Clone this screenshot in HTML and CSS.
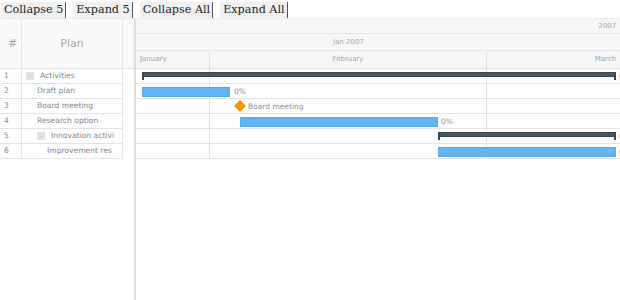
FILE: index.html
```html
<!DOCTYPE html>
<html lang="en">
<head>
  <meta charset="UTF-8">
  <title>Gantt</title>
  <link rel="stylesheet" href="styles.css">
</head>
<body>
  <div class="toolbar">
    <button>Collapse 5</button>
    <button>Expand 5</button>
    <button>Collapse All</button>
    <button>Expand All</button>
  </div>

  <div class="gantt">
    <!-- Data grid -->
    <div class="grid">
      <div class="grid-head">
        <div class="col-num">#</div>
        <div class="col-plan">Plan</div>
      </div>
      <div class="grid-row">
        <div class="col-num">1</div>
        <div class="col-plan lvl-0"><span class="toggle">-</span>Activities</div>
      </div>
      <div class="grid-row">
        <div class="col-num">2</div>
        <div class="col-plan lvl-1">Draft plan</div>
      </div>
      <div class="grid-row">
        <div class="col-num">3</div>
        <div class="col-plan lvl-1">Board meeting</div>
      </div>
      <div class="grid-row">
        <div class="col-num">4</div>
        <div class="col-plan lvl-1">Research option</div>
      </div>
      <div class="grid-row">
        <div class="col-num">5</div>
        <div class="col-plan lvl-1"><span class="toggle">-</span>Innovation activi</div>
      </div>
      <div class="grid-row">
        <div class="col-num">6</div>
        <div class="col-plan lvl-2">Improvement res</div>
      </div>
    </div>

    <!-- Timeline -->
    <div class="timeline">
      <div class="tl-head">
        <div class="tl-year">2007</div>
        <div class="tl-span">Jan 2007</div>
        <div class="tl-months">
          <div class="month m-left">January</div>
          <div class="month m-center">February</div>
          <div class="month m-right">March</div>
        </div>
      </div>
      <div class="tl-body">
        <div class="tl-cols">
          <div class="tl-col"></div>
          <div class="tl-col"></div>
          <div></div>
        </div>
        <div class="tl-row">
          <div class="summary" style="left: 6px; width: 474px;"></div>
          <span class="bar-label" style="left: 483px;">0%</span>
        </div>
        <div class="tl-row">
          <div class="task" style="left: 6px; width: 88px;"></div>
          <span class="bar-label" style="left: 98px;">0%</span>
        </div>
        <div class="tl-row">
          <div class="milestone" style="left: 100px;"></div>
          <span class="bar-label" style="left: 112px;">Board meeting</span>
        </div>
        <div class="tl-row">
          <div class="task" style="left: 104px; width: 198px;"></div>
          <span class="bar-label" style="left: 305px;">0%</span>
        </div>
        <div class="tl-row">
          <div class="summary" style="left: 302px; width: 178px;"></div>
          <span class="bar-label" style="left: 483px;">0%</span>
        </div>
        <div class="tl-row">
          <div class="task" style="left: 302px; width: 178px;"></div>
          <span class="bar-label" style="left: 483px;">0%</span>
        </div>
      </div>
    </div>
  </div>
</body>
</html>
```

FILE: styles.css
```css
/* Reset */
* {
  margin: 0;
  padding: 0;
  box-sizing: border-box;
}

body {
  font-family: 'DejaVu Sans', sans-serif;
  background-color: #fff;
  width: 620px;
  height: 300px;
  overflow: hidden;
}

/* Buttons on top */
.toolbar {
  display: flex;
  gap: 7px;
  height: 18px;
  padding: 2px 0 0 1px;
}

.toolbar button {
  font-family: 'DejaVu Serif', serif;
  font-size: 11.2px;
  line-height: 16px;
  height: 16px;
  padding: 0 2px 0 3px;
  color: #222;
  background-color: #f0f0f0;
  border: none;
  border-right: 1px solid #555;
}

/* Chart */
.gantt {
  display: flex;
  height: 282px;
  border-top: 1px solid #ececec;
}

/* Data grid */
.grid {
  flex: none;
  width: 136px;
  border-right: 2px solid #dcdcdc;
}

.grid-head {
  display: flex;
  height: 50px;
  background-color: #f9f9f9;
  border-bottom: 1px solid #e3e3e3;
  color: #a3a9ad;
  font-size: 11px;
}

.grid-head .col-num,
.grid-head .col-plan {
  display: flex;
  justify-content: center;
  align-items: center;
}

.grid-row {
  display: flex;
  width: 123px;
  height: 15px;
  border-bottom: 1px solid #e3e3e3;
  color: #7f878d;
  font-size: 7.6px;
  line-height: 14px;
}

.col-num {
  width: 22px;
  flex: none;
  padding-left: 4px;
  border-right: 1px solid #e3e3e3;
}

.col-plan {
  width: 101px;
  flex: none;
  border-right: 1px solid #e3e3e3;
  white-space: nowrap;
  overflow: hidden;
  display: flex;
  align-items: center;
}

.lvl-0 { padding-left: 4px; }
.lvl-1 { padding-left: 15px; }
.lvl-2 { padding-left: 25px; }

.toggle {
  width: 8px;
  height: 8px;
  margin-right: 6px;
  background-color: #e2e2e2;
  color: #9a9a9a;
  font-size: 6px;
  line-height: 8px;
  text-align: center;
}

/* Timeline */
.timeline {
  flex: 1;
  overflow: hidden;
}

.tl-head {
  height: 50px;
  background-color: #f6f6f6;
  border-bottom: 1px solid #e3e3e3;
  color: #a0a6aa;
  font-size: 7px;
}

.tl-year {
  height: 15px;
  line-height: 14px;
  text-align: right;
  padding-right: 4px;
  border-bottom: 1px solid #e3e3e3;
}

.tl-span {
  height: 17px;
  line-height: 16px;
  padding-left: 197px;
  border-bottom: 1px solid #e3e3e3;
}

.tl-months {
  display: grid;
  grid-template-columns: 74px 277px 1fr;
  height: 17px;
  line-height: 17px;
}

.month {
  border-right: 1px solid #e3e3e3;
  padding: 0 4px;
}

.m-left { text-align: left; }
.m-center { text-align: center; }
.m-right { text-align: right; border-right: none; }

.tl-body {
  position: relative;
  height: 90px;
}

.tl-cols {
  position: absolute;
  inset: 0;
  display: grid;
  grid-template-columns: 74px 277px 1fr;
}

.tl-col {
  border-right: 1px solid #e3e3e3;
}

.tl-row {
  position: relative;
  height: 15px;
  border-bottom: 1px solid #e3e3e3;
}

/* Bars */
.task {
  position: absolute;
  top: 3px;
  height: 10px;
  background-color: #64b5f6;
  border: 1px solid #5aa8e6;
}

.summary {
  position: absolute;
  top: 3px;
  height: 5px;
  background-color: #455a64;
  border: 1px solid #37474f;
}

.summary::before,
.summary::after {
  content: '';
  position: absolute;
  top: 0;
  width: 2px;
  height: 7px;
  background-color: #37474f;
}

.summary::before { left: -1px; }
.summary::after { right: -1px; }

.milestone {
  position: absolute;
  top: 3px;
  width: 8px;
  height: 8px;
  background-color: #ff9800;
  border: 1px solid #f08c00;
  transform: rotate(45deg);
}

.bar-label {
  position: absolute;
  top: 0;
  line-height: 15px;
  font-size: 7.5px;
  color: #8a9196;
  white-space: nowrap;
}
```
